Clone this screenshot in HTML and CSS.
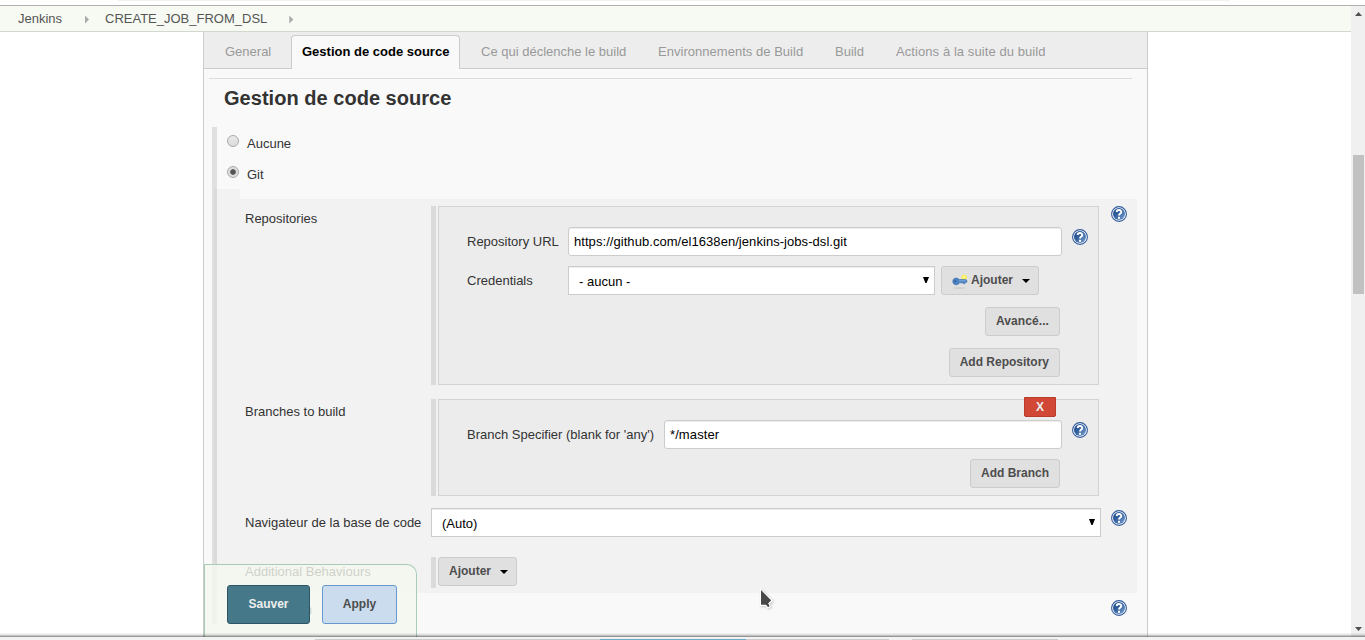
FILE: index.html
```html
<!DOCTYPE html>
<html lang="fr">
<head>
<meta charset="utf-8">
<title>CREATE_JOB_FROM_DSL Config [Jenkins]</title>
<link rel="stylesheet" href="styles.css">
</head>
<body>
<svg class="defs" width="0" height="0">
  <defs>
    <linearGradient id="blue" x1="0" y1="0" x2="1" y2="1"><stop offset="0" stop-color="#1d4482"/><stop offset=".45" stop-color="#34629f"/><stop offset="1" stop-color="#7fa6d6"/></linearGradient>
    <symbol id="help" viewBox="0 0 16 16">
      <circle cx="8" cy="8" r="7.4" fill="#fff" stroke="#2f599b" stroke-width="1.1"/>
      <circle cx="8" cy="8" r="6" fill="url(#blue)"/>
      <path d="M5.7 6.1C5.7 3.4 10.3 3.3 10.3 5.9C10.3 7.5 8 7.5 8 9.6" fill="none" stroke="#fff" stroke-width="1.9"/>
      <rect x="7" y="10.8" width="2" height="2" fill="#fff"/>
    </symbol>
  </defs>
</svg>
<div class="screen">
  <div class="chrome-top"></div>
  <div class="viewport">
    <div class="page">
      <nav class="breadcrumbs">
        <span class="crumb first">Jenkins</span><i class="sep"></i><span class="crumb">CREATE_JOB_FROM_DSL</span><i class="sep"></i>
      </nav>
      <main class="panel">
        <div class="tabs">
          <span class="tab general">General</span>
          <span class="tab active">Gestion de code source</span>
          <span class="tab triggers">Ce qui déclenche le build</span>
          <span class="tab env">Environnements de Build</span>
          <span class="tab build">Build</span>
          <span class="tab post">Actions à la suite du build</span>
        </div>
        <hr class="rule">
        <h1 class="title">Gestion de code source</h1>
        <section class="scm">
          <label class="choice"><i class="radio"></i><span>Aucune</span></label>
          <label class="choice"><i class="radio on"></i><span>Git</span></label>
          <div class="notch"></div>
          <div class="git">
            <div class="label">Repositories</div>
            <div class="chunk">
              <div class="box repo">
                <div class="line url"><span class="name">Repository URL</span><span class="input">https://github.com/el1638en/jenkins-jobs-dsl.git</span><svg class="help"><use href="#help"/></svg></div>
                <div class="line cred"><span class="name">Credentials</span><span class="select">- aucun -<i class="arrow"></i></span>
                  <span class="button add">
                    <svg class="key" width="16" height="16" viewBox="0 0 16 16"><ellipse cx="7.5" cy="14" rx="6" ry="1" fill="#cfcfcf"/><circle cx="12.2" cy="3.3" r="2.6" fill="#fbef4b"/><circle cx="12.2" cy="3.3" r="1.1" fill="#fffbb5"/><path d="M.8 7.4C.8 3.8 5 3 7.2 5.6H13.8L15.2 6.9L14.2 8.6H12.9V9.6H11.2V8.8H7.5C6.2 11.8 .8 11.4 .8 7.4Z" fill="#4b83c3" stroke="#376aa8" stroke-width=".6"/><circle cx="3.2" cy="7.2" r=".9" fill="#2d568b"/><path d="M7 6.8H13.5" stroke="#8fb5e2" stroke-width=".8"/></svg>Ajouter<i class="caret"></i></span>
                </div>
                <div class="actions"><span class="button advanced">Avancé...</span></div>
                <div class="actions"><span class="button">Add Repository</span></div>
              </div>
            </div>
            <svg class="help"><use href="#help"/></svg>

            <div class="label">Branches to build</div>
            <div class="chunk">
              <div class="box branch">
                <span class="delete">X</span>
                <div class="line"><span class="name long">Branch Specifier (blank for 'any')</span><span class="input short">*/master</span><svg class="help"><use href="#help"/></svg></div>
                <div class="actions"><span class="button">Add Branch</span></div>
              </div>
            </div>
            <span></span>

            <div class="label browser">Navigateur de la base de code</div>
            <span class="select wide">(Auto)<i class="arrow"></i></span>
            <svg class="help low"><use href="#help"/></svg>

            <div class="label behaviours">Additional Behaviours</div>
            <div class="chunk"><span class="button more">Ajouter<i class="caret"></i></span></div>
          </div>
          <div class="svn"><span>Subversion</span><svg class="help"><use href="#help"/></svg></div>
        </section>
      </main>
    </div>
    <div class="scrollbar"><i class="up"></i><div class="thumb"></div><i class="down"></i></div>
  </div>
  <div class="chrome-bottom"><i class="seg first"></i><i class="seg current"></i><i class="seg"></i><i class="seg last"></i></div>
  <div class="savebar"><span class="save">Sauver</span><span class="apply">Apply</span></div>
  <div class="window-edge"></div>
  <svg class="cursor" width="18" height="24" viewBox="0 0 18 24"><path d="M1.5 1V17.2H6.8L8.8 19.6L11 18.6L9.8 15.4L12.8 12.4Z" fill="#444" stroke="#fff" stroke-width="1.4"/><path d="M2 2V16.5H7L9 19L10.5 18.2L9 15.2L12 12.3Z" fill="#484848"/></svg>
</div>
</body>
</html>
```

FILE: styles.css
```css
* { box-sizing: border-box; }
body { margin: 0; font: 13px/16px "Liberation Sans", Arial, sans-serif; color: #333; background: #fff; overflow: hidden; }
.defs { display: block; }
.screen { position: relative; width: 1365px; height: 640px; display: flex; flex-direction: column; overflow: hidden; }
.chrome-top { height: 6px; flex: none; border-bottom: 1px solid #b0b0b0; background: linear-gradient(#f2f2f2, #f2f2f2) 118px 0 / 1112px 1px no-repeat; }
.viewport { height: 631px; display: flex; overflow: hidden; }
.page { width: 1351px; }
.breadcrumbs { display: flex; align-items: center; height: 26px; padding-left: 18px; background: #f6faf2; border-bottom: 1px solid #d3d7cf; color: #555; }
.crumb.first { width: 45px; }
.sep { width: 4px; height: 8px; margin: 2px 16px 0 22px; background: #aaa; clip-path: polygon(0 0, 100% 50%, 0 100%); }
.panel { width: 945px; height: 605px; margin-left: 203px; border: solid #ccc; border-width: 0 1px; background: #f9f9f9; }
.tabs { display: flex; gap: 10px; align-items: flex-end; height: 37px; padding-left: 10px; background: #ededed; border-bottom: 1px solid #ccc; }
.tab { height: 34px; margin-bottom: -1px; padding: 8px 0 0 10px; border: 1px solid transparent; border-bottom: 0; color: #999; white-space: nowrap; }
.tab.active { width: 169px; background: #f9f9f9; border-color: #ccc; border-radius: 4px 4px 0 0; color: #000; font-weight: bold; }
.tab.general { width: 67px; }
.tab.triggers, .tab.env { width: 167px; }
.tab.env { letter-spacing: .03px; }
.tab.build { width: 51px; }
.tab.post { letter-spacing: .08px; }
.rule { width: 923px; height: 1px; margin: 9px 0 0 5px; border: 0; background: #ddd; }
.title { height: 48px; margin: 0; padding: 7px 0 0 20px; font-size: 20px; line-height: 24px; letter-spacing: .03px; color: #333; }
.scm { height: 497px; margin-left: 8px; border-left: 5px solid #e0e0e0; }
.choice { display: flex; height: 31px; padding-left: 10px; gap: 8px; }
.choice span { margin-top: 9px; }
.radio { width: 12px; height: 12px; margin-top: 8px; border: 1px solid #aaa; border-radius: 50%; background: linear-gradient(#e8e8e8, #dcdcdc); }
.radio.on { background: radial-gradient(circle, #555 0 2.4px, #dedede 3.2px); }
.notch { width: 26px; height: 10px; margin-left: -3px; background: #f2f2f2; border-left: 3px solid #dadada; }
.git { display: grid; grid-template-columns: 186px 670px 16px; grid-template-rows: 193px 109px 49px 31px; align-items: start; width: 923px; height: 394px; margin-left: -3px; padding: 7px 0 0 28px; border-left: 3px solid #dadada; background: #f2f2f2; }
.git > .help { margin-left: 10px; }
.git > .help.low { margin-top: 2px; }
.label { padding-top: 5px; white-space: nowrap; }
.label.browser, .label.behaviours { padding-top: 7px; }
.help { display: block; flex: none; width: 16px; height: 16px; }
.chunk { border-left: 5px solid #dadada; padding-left: 2px; min-height: 31px; }
.box { position: relative; width: 661px; border: 1px solid #d3d3d3; background: #ececec; padding: 20px 38px 0 28px; }
.repo { height: 179px; }
.branch { height: 97px; }
.line { display: flex; height: 29px; width: 630px; }
.name { width: 101px; padding-top: 7px; white-space: nowrap; }
.name.long { width: 197px; }
.input { flex: 1; height: 29px; margin-right: 10px; padding: 6px 5px; border: 1px solid #ccc; border-radius: 3px; background: #fff; box-shadow: inset 0 1px 1px rgba(0,0,0,.075); color: #000; max-width: 494px; letter-spacing: .055px; }
.input.short { letter-spacing: .1px; }
.line .help { margin-top: 2px; margin-right: 9px; }
.cred { margin-top: 10px; }
.select { display: flex; justify-content: space-between; width: 367px; height: 29px; padding: 7px 5px 0 10px; border: 1px solid #ccc; background: #fff; box-shadow: inset 0 1px 1px rgba(0,0,0,.075); color: #000; }
.select.wide { width: 670px; }
.arrow { width: 6px; height: 6px; margin: 3px 0 0; background: #000; clip-path: polygon(0 0, 100% 0, 60% 100%, 40% 100%); }
.button { display: inline-flex; align-items: flex-start; height: 29px; padding: 5px 10px; border: 1px solid #ccc; border-radius: 3px; background: #e0e0e0; color: #4d4d4d; font-weight: bold; font-size: 12px; white-space: nowrap; }
.add { width: 98px; margin-left: 6px; }
.more { width: 79px; }
.advanced { width: 75px; letter-spacing: .08px; }
.key { flex: none; margin: 2px 3px 0 0; }
.caret { flex: none; width: 8px; height: 4px; margin: 7px 0 0 9px; background: #000; clip-path: polygon(0 0, 100% 0, 50% 100%); }
.actions { display: flex; justify-content: flex-end; margin-top: 12px; }
.branch .actions { margin-top: 10px; }
.delete { position: absolute; top: -3px; left: 585px; width: 32px; height: 20px; border: 1px solid #bb3a2b; border-radius: 0 0 2px 2px; background: #d14836; color: #eee; font-size: 12px; line-height: 18px; font-weight: bold; text-align: center; }
.svn { display: flex; justify-content: space-between; width: 910px; padding: 9px 0 0 30px; }
.svn .help { margin-top: -2px; }
.scrollbar { display: flex; flex-direction: column; width: 14px; padding: 6px 1px 4px 2px; background: #f0f0f0; }
.up, .down { flex: none; width: 7px; height: 4px; margin-left: 2px; background: #505050; }
.up { clip-path: polygon(50% 0, 100% 100%, 0 100%); }
.down { margin-top: auto; margin-bottom: 2px; clip-path: polygon(0 0, 100% 0, 50% 100%); }
.thumb { height: 139px; margin-top: 139px; background: #c1c1c1; }
.chrome-bottom { display: flex; align-items: flex-end; height: 3px; padding-left: 315px; background: #f2f2f2; }
.seg { width: 143px; height: 1px; background: #ccc; }
.seg.first { width: 285px; }
.seg.current { width: 146px; background: #6cabc8; }
.seg.last { width: 146px; margin-left: 23px; }
.savebar { position: absolute; left: 204px; top: 564px; display: flex; gap: 12px; width: 213px; height: 73px; padding: 20px 0 0 22px; border: solid #a8ccb8; border-width: 1px 1px 0; border-radius: 0 10px 0 0; background: rgba(244,248,239,.8); }
.save, .apply { height: 39px; border: 1px solid #2d5566; border-radius: 3px; font-weight: bold; font-size: 12px; line-height: 37px; text-align: center; }
.save { width: 83px; background: #457989; color: #eee; }
.apply { width: 75px; background: #cadcee; border-color: #6699d0; color: #4d4d4d; }
.window-edge { position: absolute; left: 0; top: 633px; width: 1365px; height: 4px; background: linear-gradient(rgba(0,0,0,.04) 0 1px, rgba(0,0,0,.1) 1px 2px, rgba(0,0,0,.22) 2px 3px, rgba(0,0,0,.4) 3px); }
.cursor { position: absolute; left: 759px; top: 588px; filter: drop-shadow(1px 1px 1px rgba(0,0,0,.2)); }
```
